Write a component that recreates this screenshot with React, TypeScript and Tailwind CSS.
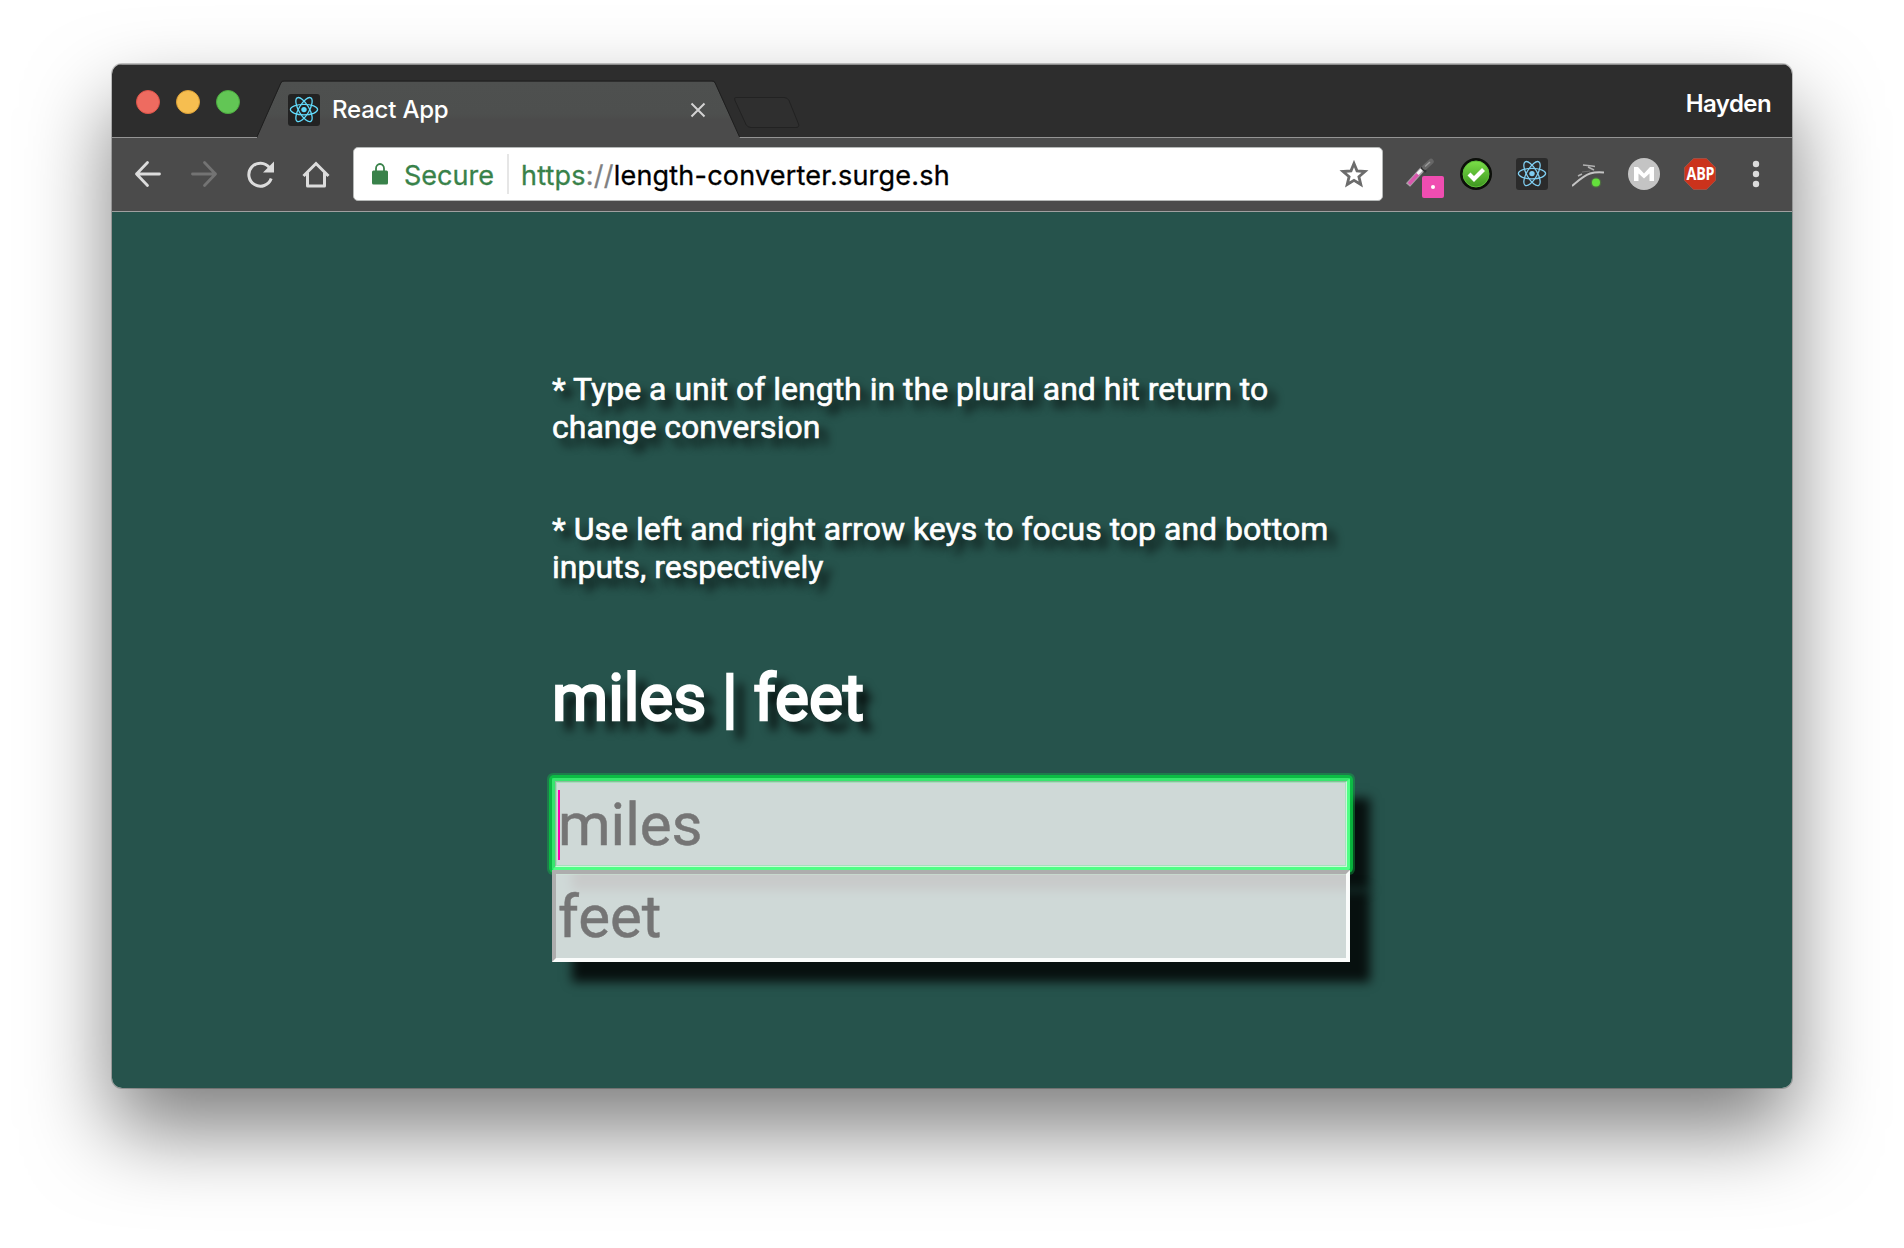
import React from "react";

function Atom({ color, bg }: { color: string; bg: string }) {
  return (
    <svg className="size-8 shrink-0" viewBox="0 0 32 32" fill="none">
      <rect width="32" height="32" rx="3" fill={bg} />
      <circle cx="16" cy="15.6" r="2.7" fill={color} />
      <g stroke={color} strokeWidth="1.3">
        <ellipse cx="16" cy="15.6" rx="13.6" ry="5.2" />
        <ellipse cx="16" cy="15.6" rx="13.6" ry="5.2" transform="rotate(60 16 15.6)" />
        <ellipse cx="16" cy="15.6" rx="13.6" ry="5.2" transform="rotate(120 16 15.6)" />
      </g>
    </svg>
  );
}

function TabStrip() {
  return (
    <div className="relative flex h-[74px] shrink-0 bg-[#2d2d2d]">
      <svg className="absolute left-0 top-0 h-[74px] w-[1680px]" viewBox="0 0 1680 74" fill="none">
        <defs>
          <linearGradient id="tab" x1="0" y1="17" x2="0" y2="56" gradientUnits="userSpaceOnUse">
            <stop offset="0" stopColor="#4e504f" />
            <stop offset="0.85" stopColor="#4d4f4e" />
            <stop offset="1" stopColor="#4b4b4b" />
          </linearGradient>
        </defs>
        <path d="M144.500 74L169 19.500Q170 17.500 172 17.500H600Q602 17.500 603 19.500L628 74Z" fill="url(#tab)" />
        <path d="M144.500 74L169 18.500Q170 17 172 17H600Q602 17 603 18.500L628 74" stroke="#1e1e1e" />
        <path d="M0 73.500H145M627.500 73.500H1680" stroke="#949494" />
        <path d="M0 0.500H1680" stroke="#8c8c8c" />
        <path d="M624 33.500H672Q675.500 33.500 677 36.500L686.500 60Q687.500 63.500 684 63.500H639Q635.500 63.500 634 60.500L623 36.500Q621.500 33.500 624 33.500Z" fill="#2f2f2f" stroke="#222" />
      </svg>
      <div className="relative flex w-full items-start">
        <div className="ml-6 mt-[26px] flex gap-4">
          <i className="size-6 rounded-full border border-[#dd5348] bg-[#ee6b60]" />
          <i className="size-6 rounded-full border border-[#dca036] bg-[#f6be50]" />
          <i className="size-6 rounded-full border border-[#4cab3f] bg-[#62c655]" />
        </div>
        <div className="ml-12 mt-[30px] flex h-8 w-[420px] items-center">
          <Atom color="#61dafb" bg="#222222" />
          <span className="ml-[12px] whitespace-nowrap font-[Inter] text-[24px] font-medium leading-8 tracking-[-0.2px] text-white">React App</span>
          <svg className="ml-auto mr-[2px] size-4" viewBox="0 0 16 16" fill="none" stroke="#d3d3d3" strokeWidth="2">
            <path d="M1.500 1.500L14.500 14.500M14.500 1.500L1.500 14.500" />
          </svg>
        </div>
        <span className="ml-auto mr-[21px] mt-6 font-[Inter] text-[24px] font-semibold leading-8 tracking-[-0.6px] text-white">Hayden</span>
      </div>
    </div>
  );
}

function NavIcons() {
  return (
    <div className="ml-5 flex gap-6 text-[#dcdcdc]">
      <svg className="size-8" viewBox="0 0 32 32" fill="none" stroke="currentColor" strokeWidth="2.800">
        <path d="M27.500 16H4.500M15.500 4.500L4.500 16L15.500 27.500" strokeLinecap="round" strokeLinejoin="round" />
      </svg>
      <svg className="size-8 text-[#737373]" viewBox="0 0 32 32" fill="none" stroke="currentColor" strokeWidth="2.800">
        <path d="M4.500 16H27.500M16.500 4.500L27.500 16L16.500 27.500" strokeLinecap="round" strokeLinejoin="round" />
      </svg>
      <svg className="size-8" viewBox="0 0 32 32" fill="none" stroke="currentColor" strokeWidth="3">
        <path d="M25.500 9.700A11.500 11.500 0 1 0 27.200 20.500" />
        <path d="M30 3.500V14.500H19Z" fill="currentColor" stroke="none" />
      </svg>
      <svg className="size-8" viewBox="0 0 32 32" fill="none" stroke="currentColor" strokeWidth="3">
        <path d="M3.500 18L16 5.500L28.500 18" />
        <path d="M7.500 14.500V28H24.500V14.500" strokeLinejoin="round" />
      </svg>
    </div>
  );
}

function Extensions() {
  return (
    <div className="ml-[21px] flex gap-6">
      <div className="relative size-8">
        <svg className="size-8" viewBox="0 0 32 32" fill="none">
          <path d="M4 27L19.500 10" stroke="#aaa4a9" strokeWidth="5.500" />
          <path d="M5 26L14.500 15.500" stroke="#d957ae" strokeWidth="3.400" />
          <path d="M13.500 16L19.500 9.500" stroke="#f4f4f4" strokeWidth="3" />
          <path d="M17 9L22 14" stroke="#333" strokeWidth="2.500" />
          <path d="M21 9L27 3.500" stroke="#666" strokeWidth="5.500" strokeLinecap="round" />
          <path d="M21 8.500L26 4" stroke="#999" strokeWidth="1.500" />
        </svg>
        <span className="absolute left-[18px] top-[18px] flex size-[22px] items-center justify-center rounded-[2px] bg-[#f04db1]">
          <i className="size-1 rounded-full bg-white" />
        </span>
      </div>
      <svg className="size-8" viewBox="0 0 32 32" fill="none">
        <defs>
          <linearGradient id="ok" x1="0" y1="3" x2="0" y2="29" gradientUnits="userSpaceOnUse">
            <stop stopColor="#7ade48" />
            <stop offset="1" stopColor="#3e9620" />
          </linearGradient>
        </defs>
        <circle cx="16" cy="16" r="16" fill="#0c0f0a" />
        <circle cx="16" cy="16" r="13" fill="url(#ok)" stroke="#5fc03a" />
        <path d="M9 16L14 21L23.500 11.500" stroke="#fff" strokeWidth="4.200" />
      </svg>
      <Atom color="#7fcdf0" bg="#2b2b2b" />
      <svg className="size-8" viewBox="0 0 32 32" fill="none">
        <path d="M0 28C6 23 11 18 18 15.500C23 14 27 14 32 14.500" stroke="#c4c4c4" strokeWidth="1.900" />
        <path d="M11 7L20 8L23 8.500M16 9L22 12M6 18L10 16" stroke="#b0b0b0" strokeWidth="1.600" />
        <path d="M10 14L18 13" stroke="#707070" />
        <circle cx="24" cy="24.500" r="5.300" fill="#4e7f3c" opacity="0.6" />
        <circle cx="24" cy="24.500" r="4" fill="#64e03c" />
      </svg>
      <svg className="size-8" viewBox="0 0 32 32" fill="none">
        <circle cx="16" cy="16" r="16" fill="#c4c4c4" />
        <path d="M6 23V9H10L16 15.500L22 9H26V23H21.500V15.500L16 20.500L10.500 15.500V23Z" fill="#fff" />
      </svg>
      <div className="relative flex size-8 items-center justify-center">
        <svg className="absolute inset-0 size-8" viewBox="0 0 32 32">
          <path d="M9.500 0.500H22.500L31.500 9.500V22.500L22.500 31.500H9.500L0.500 22.500V9.500Z" fill="#cb331c" stroke="#a55a4e" strokeWidth="0.700" />
        </svg>
        <span className="relative scale-x-[0.84] font-['Open_Sans'] text-[17px] font-bold leading-8 tracking-[-0.4px] text-white">ABP</span>
      </div>
      <svg className="size-8" viewBox="0 0 32 32" fill="#dcdcdc">
        <circle cx="16" cy="6" r="3.200" />
        <circle cx="16" cy="16" r="3.200" />
        <circle cx="16" cy="26" r="3.200" />
      </svg>
    </div>
  );
}

function Toolbar() {
  return (
    <div className="flex h-[74px] shrink-0 items-center border-b border-[#a0a0a0] bg-[#4b4b4b] pb-px">
      <NavIcons />
      <div className="ml-[21px] flex h-[54px] w-[1030px] items-center rounded-[5px] border border-[#b5b8b7] bg-white font-[Inter] text-[27px]">
        <svg className="ml-[18px] h-[22px] w-4" viewBox="0 0 16 22" fill="none">
          <rect y="7.500" width="16" height="14" rx="1.500" fill="#39824a" />
          <path d="M4 8V5.500A4 4.500 0 0 1 12 5.500V8" stroke="#39824a" strokeWidth="1.800" />
        </svg>
        <span className="ml-4 w-[90px] whitespace-nowrap pt-1 text-[#39824a] [-webkit-text-stroke:0.3px_#39824a]">Secure</span>
        <i className="ml-[13px] h-10 w-[2px] bg-[#e6e6e6]" />
        <span className="ml-3 whitespace-nowrap pt-1 tracking-[0.21px] text-black [-webkit-text-stroke:0.3px_currentColor]">
          <span className="text-[#39824a]">https</span><span className="text-[#808080]">://</span>length-converter.surge.sh
        </span>
        <svg className="ml-auto mr-[13px] h-[28px] w-[30px]" viewBox="0 0 30 28" fill="none" stroke="#6c6c6c" strokeWidth="2.800">
          <path d="M15 3.500L18 10.900L26 11.500L19.900 16.700L21.800 24.500L15 20.300L8.200 24.500L10.100 16.700L4 11.500L12 10.900Z" />
        </svg>
      </div>
      <Extensions />
    </div>
  );
}

function ConverterPage() {
  return (
    <main className="flex grow flex-col bg-[#26534c] pl-[440px] font-[Roboto] text-white">
      <p className="mt-[158px] w-[798px] text-[32px] leading-[38px] [-webkit-text-stroke:0.6px_white] [text-shadow:8px_8px_8px_rgba(0,0,0,0.85)]">
        * Type a unit of length in the plural and hit return to<br />change conversion
      </p>
      <p className="mt-16 w-[798px] text-[32px] leading-[38px] [-webkit-text-stroke:0.6px_white] [text-shadow:8px_8px_8px_rgba(0,0,0,0.85)]">
        * Use left and right arrow keys to focus top and bottom<br />inputs, respectively
      </p>
      <h1 className="mt-[75px] text-[64px] font-normal leading-[76px] [-webkit-text-stroke:2.4px_white] [text-shadow:10px_10px_10px_rgba(0,0,0,1)]">miles | feet</h1>
      <div className="mt-[41px] flex w-[798px] flex-col text-[60px] leading-[80px]">
        <div className="relative h-[92px] border-4 border-b-[#fafcfb] border-l-[#adadad] border-r-[#fafcfb] border-t-[#adadad] bg-white/78 bg-clip-padding p-[2px] shadow-[20px_20px_10px_rgba(0,0,0,0.8)]">
          <input readOnly placeholder="miles" className="block h-20 w-full bg-transparent pt-[2px] outline-none placeholder:text-[#757575] placeholder:[-webkit-text-stroke:0.5px_#757575]" />
          <i className="absolute left-[2px] top-2 h-[70px] w-[2px] bg-[#ff00b0]" />
          <i className="absolute -inset-1 rounded-[2px] shadow-[0_0_0_3px_rgba(7,202,66,0.8),0_0_0_5px_rgba(17,200,75,0.35)]" />
          <i className="absolute -inset-1 shadow-[inset_0_0_0_3px_rgba(0,255,80,0.6),inset_0_0_0_5px_rgba(0,255,80,0.2)]" />
        </div>
        <div className="relative h-[92px] border-4 border-b-[#fafcfb] border-l-[#adadad] border-r-[#fafcfb] border-t-[#adadad] bg-white/78 bg-clip-padding p-[2px] shadow-[20px_20px_10px_rgba(0,0,0,0.8)]">
          <input readOnly placeholder="feet" className="block h-20 w-full bg-transparent pt-[2px] outline-none placeholder:text-[#757575] placeholder:[-webkit-text-stroke:0.5px_#757575]" />
        </div>
      </div>
    </main>
  );
}

export default function App() {
  return (
    <div className="h-[1248px] w-[1904px] overflow-hidden bg-white px-28 pt-16">
      <div className="flex h-[1024px] w-[1680px] flex-col overflow-hidden rounded-[10px] shadow-[0_0_0_1px_rgba(0,0,0,0.22),0_42px_84px_rgba(0,0,0,0.51)]">
        <TabStrip />
        <Toolbar />
        <ConverterPage />
      </div>
    </div>
  );
}
